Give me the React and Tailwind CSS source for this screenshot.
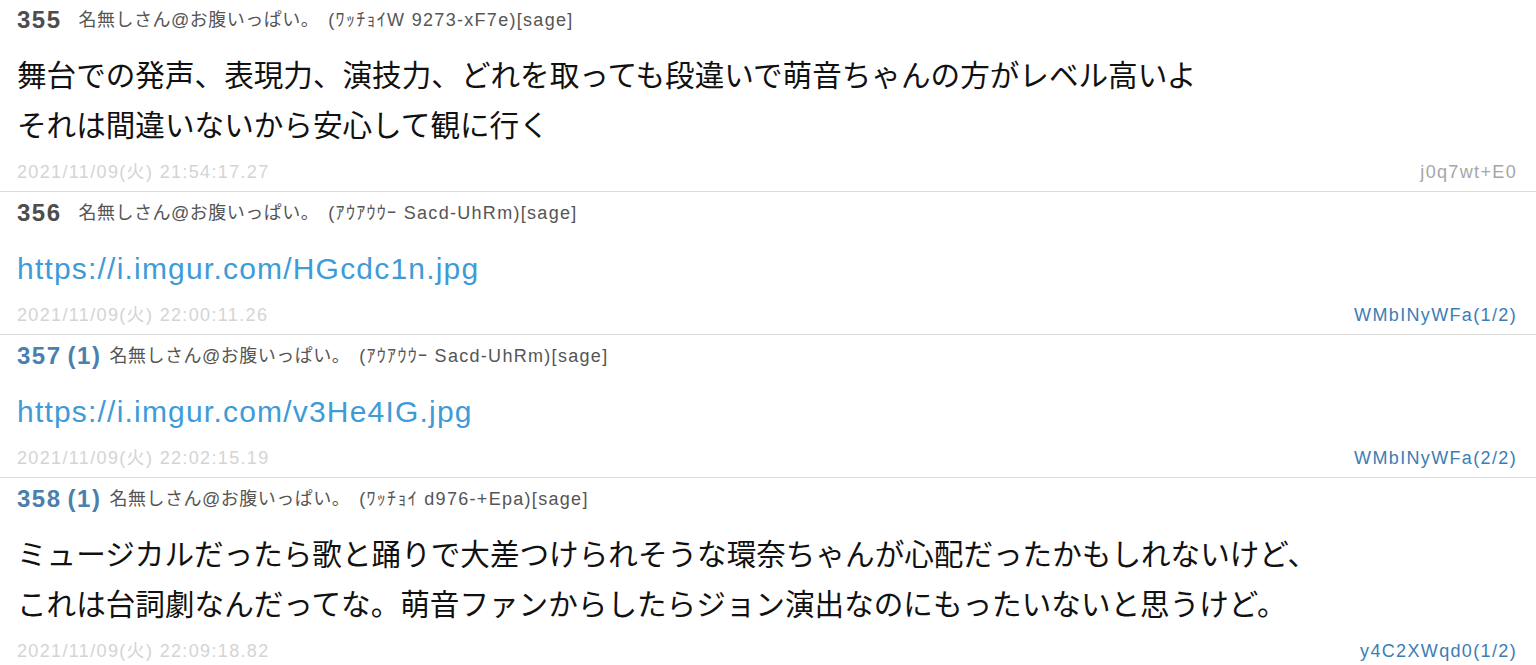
import React from 'react'

const posts = [
  {
    no: 355,
    refs: null,
    meta: '(ﾜｯﾁｮｲW 9273-xF7e)[sage]',
    body: ['舞台での発声、表現力、演技力、どれを取っても段違いで萌音ちゃんの方がレベル高いよ', 'それは間違いないから安心して観に行く'],
    date: '2021/11/09(火) 21:54:17.27',
    id: 'j0q7wt+E0',
    idLinked: false,
  },
  {
    no: 356,
    refs: null,
    meta: '(ｱｳｱｳｳｰ Sacd-UhRm)[sage]',
    link: 'https://i.imgur.com/HGcdc1n.jpg',
    date: '2021/11/09(火) 22:00:11.26',
    id: 'WMbINyWFa(1/2)',
    idLinked: true,
  },
  {
    no: 357,
    refs: 1,
    meta: '(ｱｳｱｳｳｰ Sacd-UhRm)[sage]',
    link: 'https://i.imgur.com/v3He4IG.jpg',
    date: '2021/11/09(火) 22:02:15.19',
    id: 'WMbINyWFa(2/2)',
    idLinked: true,
  },
  {
    no: 358,
    refs: 1,
    meta: '(ﾜｯﾁｮｲ d976-+Epa)[sage]',
    body: ['ミュージカルだったら歌と踊りで大差つけられそうな環奈ちゃんが心配だったかもしれないけど、', 'これは台詞劇なんだってな。萌音ファンからしたらジョン演出なのにもったいないと思うけど。'],
    date: '2021/11/09(火) 22:09:18.82',
    id: 'y4C2XWqd0(1/2)',
    idLinked: true,
  },
]

const Post = ({ post }) => (
  <div className="border-b border-[#dcdcdc] pl-[17px] pr-[19px] pt-[8px] pb-[8px]">
    <div className="flex h-[26px] items-center">
      <span
        className={`text-[24px] font-bold leading-none tracking-[1.5px] ${post.refs ? 'text-[#4a7fae]' : 'text-[#4d4d4d]'}`}
      >
        {post.no}
        {post.refs && <span className="ml-[6px]">({post.refs})</span>}
      </span>
      <span className={`${post.refs ? 'ml-[8px]' : 'ml-[17px]'} text-[18px] tracking-[0.5px] text-[#555]`}>名無しさん@お腹いっぱい。</span>
      <span className="ml-[9px] text-[18px] tracking-[1.3px] text-[#555]">{post.meta}</span>
    </div>
    <div className="mt-[18px] text-[29.6px] leading-[50px] text-[#111]">
      {post.link ? (
        <a className="text-[30px] tracking-[1.2px] text-[#3e9bd8]">{post.link}</a>
      ) : (
        post.body.map((line, i) => <div key={i}>{line}</div>)
      )}
    </div>
    <div className="mt-[10px] flex h-[22px] items-center justify-between text-[18px] tracking-[1.35px]">
      <span className="text-[#d4d4d4]">{post.date}</span>
      <span className={post.idLinked ? 'text-[#3c7db5]' : 'text-[#a6a6a6]'}>{post.id}</span>
    </div>
  </div>
)

const App = () => {
  return (
    <div
      className="h-[665px] w-full overflow-hidden bg-white"
      style={{ fontFamily: '"Liberation Sans", "Noto Sans CJK JP", sans-serif' }}
    >
      <div className="-mt-[1px]">
        {posts.map((p) => (
          <Post key={p.no} post={p} />
        ))}
      </div>
    </div>
  )
}

export default App
